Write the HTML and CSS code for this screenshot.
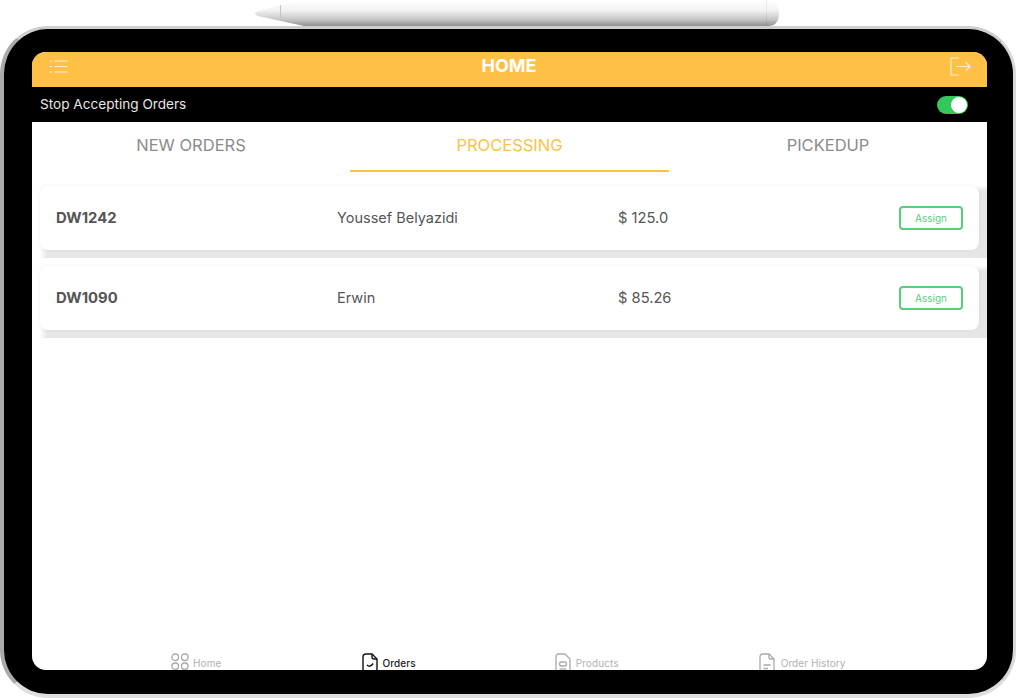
FILE: index.html
```html
<!DOCTYPE html>
<html lang="en">
<head>
    <meta charset="UTF-8">
    <meta name="viewport" content="width=device-width, initial-scale=1.0">
    <title>Orders</title>
    <link rel="stylesheet" href="styles.css">
</head>
<body>
    <!-- Pencil above the tablet -->
    <div class="pencil">
        <svg width="526" height="26" viewBox="0 0 526 26">
            <defs>
                <linearGradient id="pencilShade" x1="0" y1="0" x2="0" y2="1">
                    <stop offset="0" stop-color="#ffffff"/>
                    <stop offset="0.4" stop-color="#f2f2f2"/>
                    <stop offset="0.75" stop-color="#c6c6c6"/>
                    <stop offset="1" stop-color="#8f8f8f"/>
                </linearGradient>
            </defs>
            <path d="M1 13 Q1 12 4 11 L27 5 L50 0 H514 Q525 0 525 13 Q525 26 514 26 H50 L27 21 L4 16 Q1 15 1 13 Z" fill="url(#pencilShade)"/>
            <path d="M26.500 5 V21" stroke="#c4c4c4" fill="none"/>
            <path d="M512.500 0 V26" stroke="#000" stroke-opacity="0.06" fill="none"/>
        </svg>
    </div>

    <div class="tablet">
        <div class="screen">
            <header class="top-bar">
                <svg class="menu-icon" width="18" height="13" viewBox="0 0 18 13" fill="none" stroke="#fff" stroke-opacity="0.8" stroke-width="1.200">
                    <path d="M0 1 H2 M0 6.500 H2 M0 12 H2"/>
                    <path d="M4.500 1 H17.500 M4.500 6.500 H17.500 M4.500 12 H17.500"/>
                </svg>
                <h1>HOME</h1>
                <svg class="logout-icon" width="21" height="19" viewBox="0 0 21 19" fill="none" stroke="#fff" stroke-opacity="0.75" stroke-width="1.200">
                    <path d="M9 1 H1 V18 H9"/>
                    <path d="M6 9.500 H20 M15.500 5 L20 9.500 L15.500 14"/>
                </svg>
            </header>

            <div class="accept-bar">
                <span>Stop Accepting Orders</span>
                <div class="toggle"><div class="toggle-knob"></div></div>
            </div>

            <nav class="tabs">
                <div class="tab">NEW ORDERS</div>
                <div class="tab active">PROCESSING</div>
                <div class="tab">PICKEDUP</div>
            </nav>

            <main class="orders">
                <div class="order-band">
                    <div class="order-card">
                        <div class="order-id">DW1242</div>
                        <div class="order-name">Youssef Belyazidi</div>
                        <div class="order-price">$ 125.0</div>
                        <button class="assign">Assign</button>
                    </div>
                </div>
                <div class="order-band">
                    <div class="order-card">
                        <div class="order-id">DW1090</div>
                        <div class="order-name">Erwin</div>
                        <div class="order-price">$ 85.26</div>
                        <button class="assign">Assign</button>
                    </div>
                </div>
            </main>

            <footer class="bottom-nav">
                <div class="nav-item nav-home">
                    <svg width="18" height="18" viewBox="0 0 18 18" fill="none" stroke="#aaa" stroke-width="1.300">
                        <rect x="1" y="1" width="6.500" height="6.500" rx="3"/>
                        <rect x="10.500" y="1" width="6.500" height="6.500" rx="3"/>
                        <rect x="1" y="10" width="6.500" height="6.500" rx="3"/>
                        <rect x="10.500" y="10" width="6.500" height="6.500" rx="3"/>
                    </svg>
                    <span>Home</span>
                </div>
                <div class="nav-item nav-orders active">
                    <svg width="16" height="20" viewBox="0 0 16 20" fill="none" stroke="#111" stroke-width="1.400">
                        <path d="M10 1 H4 Q1 1 1 4 V16 Q1 19 4 19 H12 Q15 19 15 16 V6 Z"/>
                        <path d="M10 1 V4 Q10 6 12 6 H15"/>
                        <path d="M5 12 Q8 15 11 10.500"/>
                    </svg>
                    <span>Orders</span>
                </div>
                <div class="nav-item nav-products">
                    <svg width="16" height="20" viewBox="0 0 16 20" fill="none" stroke="#aaa" stroke-width="1.300">
                        <path d="M10 1 H4 Q1 1 1 4 V16 Q1 19 4 19 H12 Q15 19 15 16 V6 Z"/>
                        <rect x="4.500" y="9" width="7" height="4" rx="2"/>
                        <path d="M4.500 16 H11.500"/>
                    </svg>
                    <span>Products</span>
                </div>
                <div class="nav-item nav-history">
                    <svg width="16" height="20" viewBox="0 0 16 20" fill="none" stroke="#aaa" stroke-width="1.300">
                        <path d="M10 1 H4 Q1 1 1 4 V16 Q1 19 4 19 H12 Q15 19 15 16 V6 Z"/>
                        <path d="M10 1 V4 Q10 6 12 6 H15"/>
                        <path d="M4.500 12 H11.500 M4.500 15.500 H9"/>
                    </svg>
                    <span>Order History</span>
                </div>
            </footer>
        </div>
    </div>
</body>
</html>
```

FILE: styles.css
```css
html, body {
    height: 100%;
}
body {
    margin: 0;
    background-color: #fff;
    font-family: Inter, "Open Sans", sans-serif;
    overflow: hidden;
}
.pencil {
    height: 26px;
    padding-left: 254px;
}
.pencil svg {
    display: block;
}
.tablet {
    box-sizing: border-box;
    width: 1016px;
    height: 672px;
    padding: 23px 26px 24px 28px;
    background-color: #000;
    border-style: solid;
    border-width: 3px 3px 4px 4px;
    border-color: #cfcfcf #d8d8d8 #dedede #aaaaaa;
    border-radius: 48px;
}
.screen {
    display: flex;
    flex-direction: column;
    width: 955px;
    height: 618px;
    background-color: #fff;
    border-radius: 14px;
    overflow: hidden;
}
.top-bar {
    flex: none;
    display: flex;
    align-items: center;
    justify-content: space-between;
    box-sizing: border-box;
    height: 35px;
    padding: 0 16px 7px 18px;
    background-color: #ffc145;
}
.top-bar h1 {
    margin: 0 0 2px 0;
    color: #fff;
    font-size: 18px;
    font-weight: 700;
}
.accept-bar {
    flex: none;
    display: flex;
    align-items: center;
    justify-content: space-between;
    height: 35px;
    padding: 0 19px 0 8px;
    background-color: #000;
    color: #e6e6e6;
    font-size: 13.600px;
}
.accept-bar span {
    padding-bottom: 1px;
}
.toggle {
    width: 31px;
    height: 18px;
    background-color: #34c759;
    border-radius: 9px;
    position: relative;
}
.toggle-knob {
    position: absolute;
    top: 1px;
    right: 1px;
    width: 16px;
    height: 16px;
    background-color: #fff;
    border-radius: 50%;
}
.tabs {
    flex: none;
    display: grid;
    grid-template-columns: 318px 319px 318px;
    height: 50px;
}
.tab {
    display: flex;
    align-items: center;
    justify-content: center;
    padding-bottom: 4px;
    color: #8c8c8c;
    font-size: 16.500px;
}
.tab.active {
    color: #f8c445;
    border-bottom: 2px solid #f8c445;
    padding-bottom: 2px;
}
.orders {
    flex: 1;
    padding-top: 14px;
}
.order-band {
    height: 72px;
    margin: 0 0 8px 8px;
    background-image: linear-gradient(to bottom, #fff, rgba(255,255,255,0) 5px), linear-gradient(to right, #fff, #e6e6e6 8px);
}
.order-card {
    display: grid;
    grid-template-columns: 281px 281px 1fr auto;
    align-items: center;
    box-sizing: border-box;
    width: 939px;
    height: 64px;
    padding: 0 16px;
    background-color: #fff;
    border-radius: 8px;
    box-shadow: 0 0 4px rgba(0,0,0,0.06);
    color: #555;
    font-size: 14.500px;
}
.order-id {
    padding-bottom: 1px;
    font-size: 14.800px;
    font-weight: 700;
}
.order-name {
    padding-bottom: 2px;
}
.order-price {
    padding-bottom: 1px;
    font-size: 14.700px;
}
.assign {
    width: 64px;
    height: 24px;
    padding: 0;
    background-color: #fff;
    border: 2px solid #55d07a;
    border-radius: 4px;
    color: #55d07a;
    font-family: inherit;
    font-size: 10px;
}
.bottom-nav {
    flex: none;
    display: flex;
    height: 22px;
    padding-top: 5px;
    box-sizing: border-box;
    overflow: hidden;
}
.nav-item {
    display: flex;
    align-items: flex-start;
    gap: 4px;
    color: #b0b0b0;
    font-size: 10px;
    letter-spacing: 0.100px;
}
.nav-item span {
    padding-top: 4px;
}
.nav-item.active {
    color: #222;
    font-weight: 500;
}
.nav-home {
    margin-left: 139px;
}
.nav-orders {
    margin-left: 141px;
}
.nav-products {
    margin-left: 139px;
    gap: 5px;
}
.nav-history {
    margin-left: 140px;
    gap: 6px;
}
```
